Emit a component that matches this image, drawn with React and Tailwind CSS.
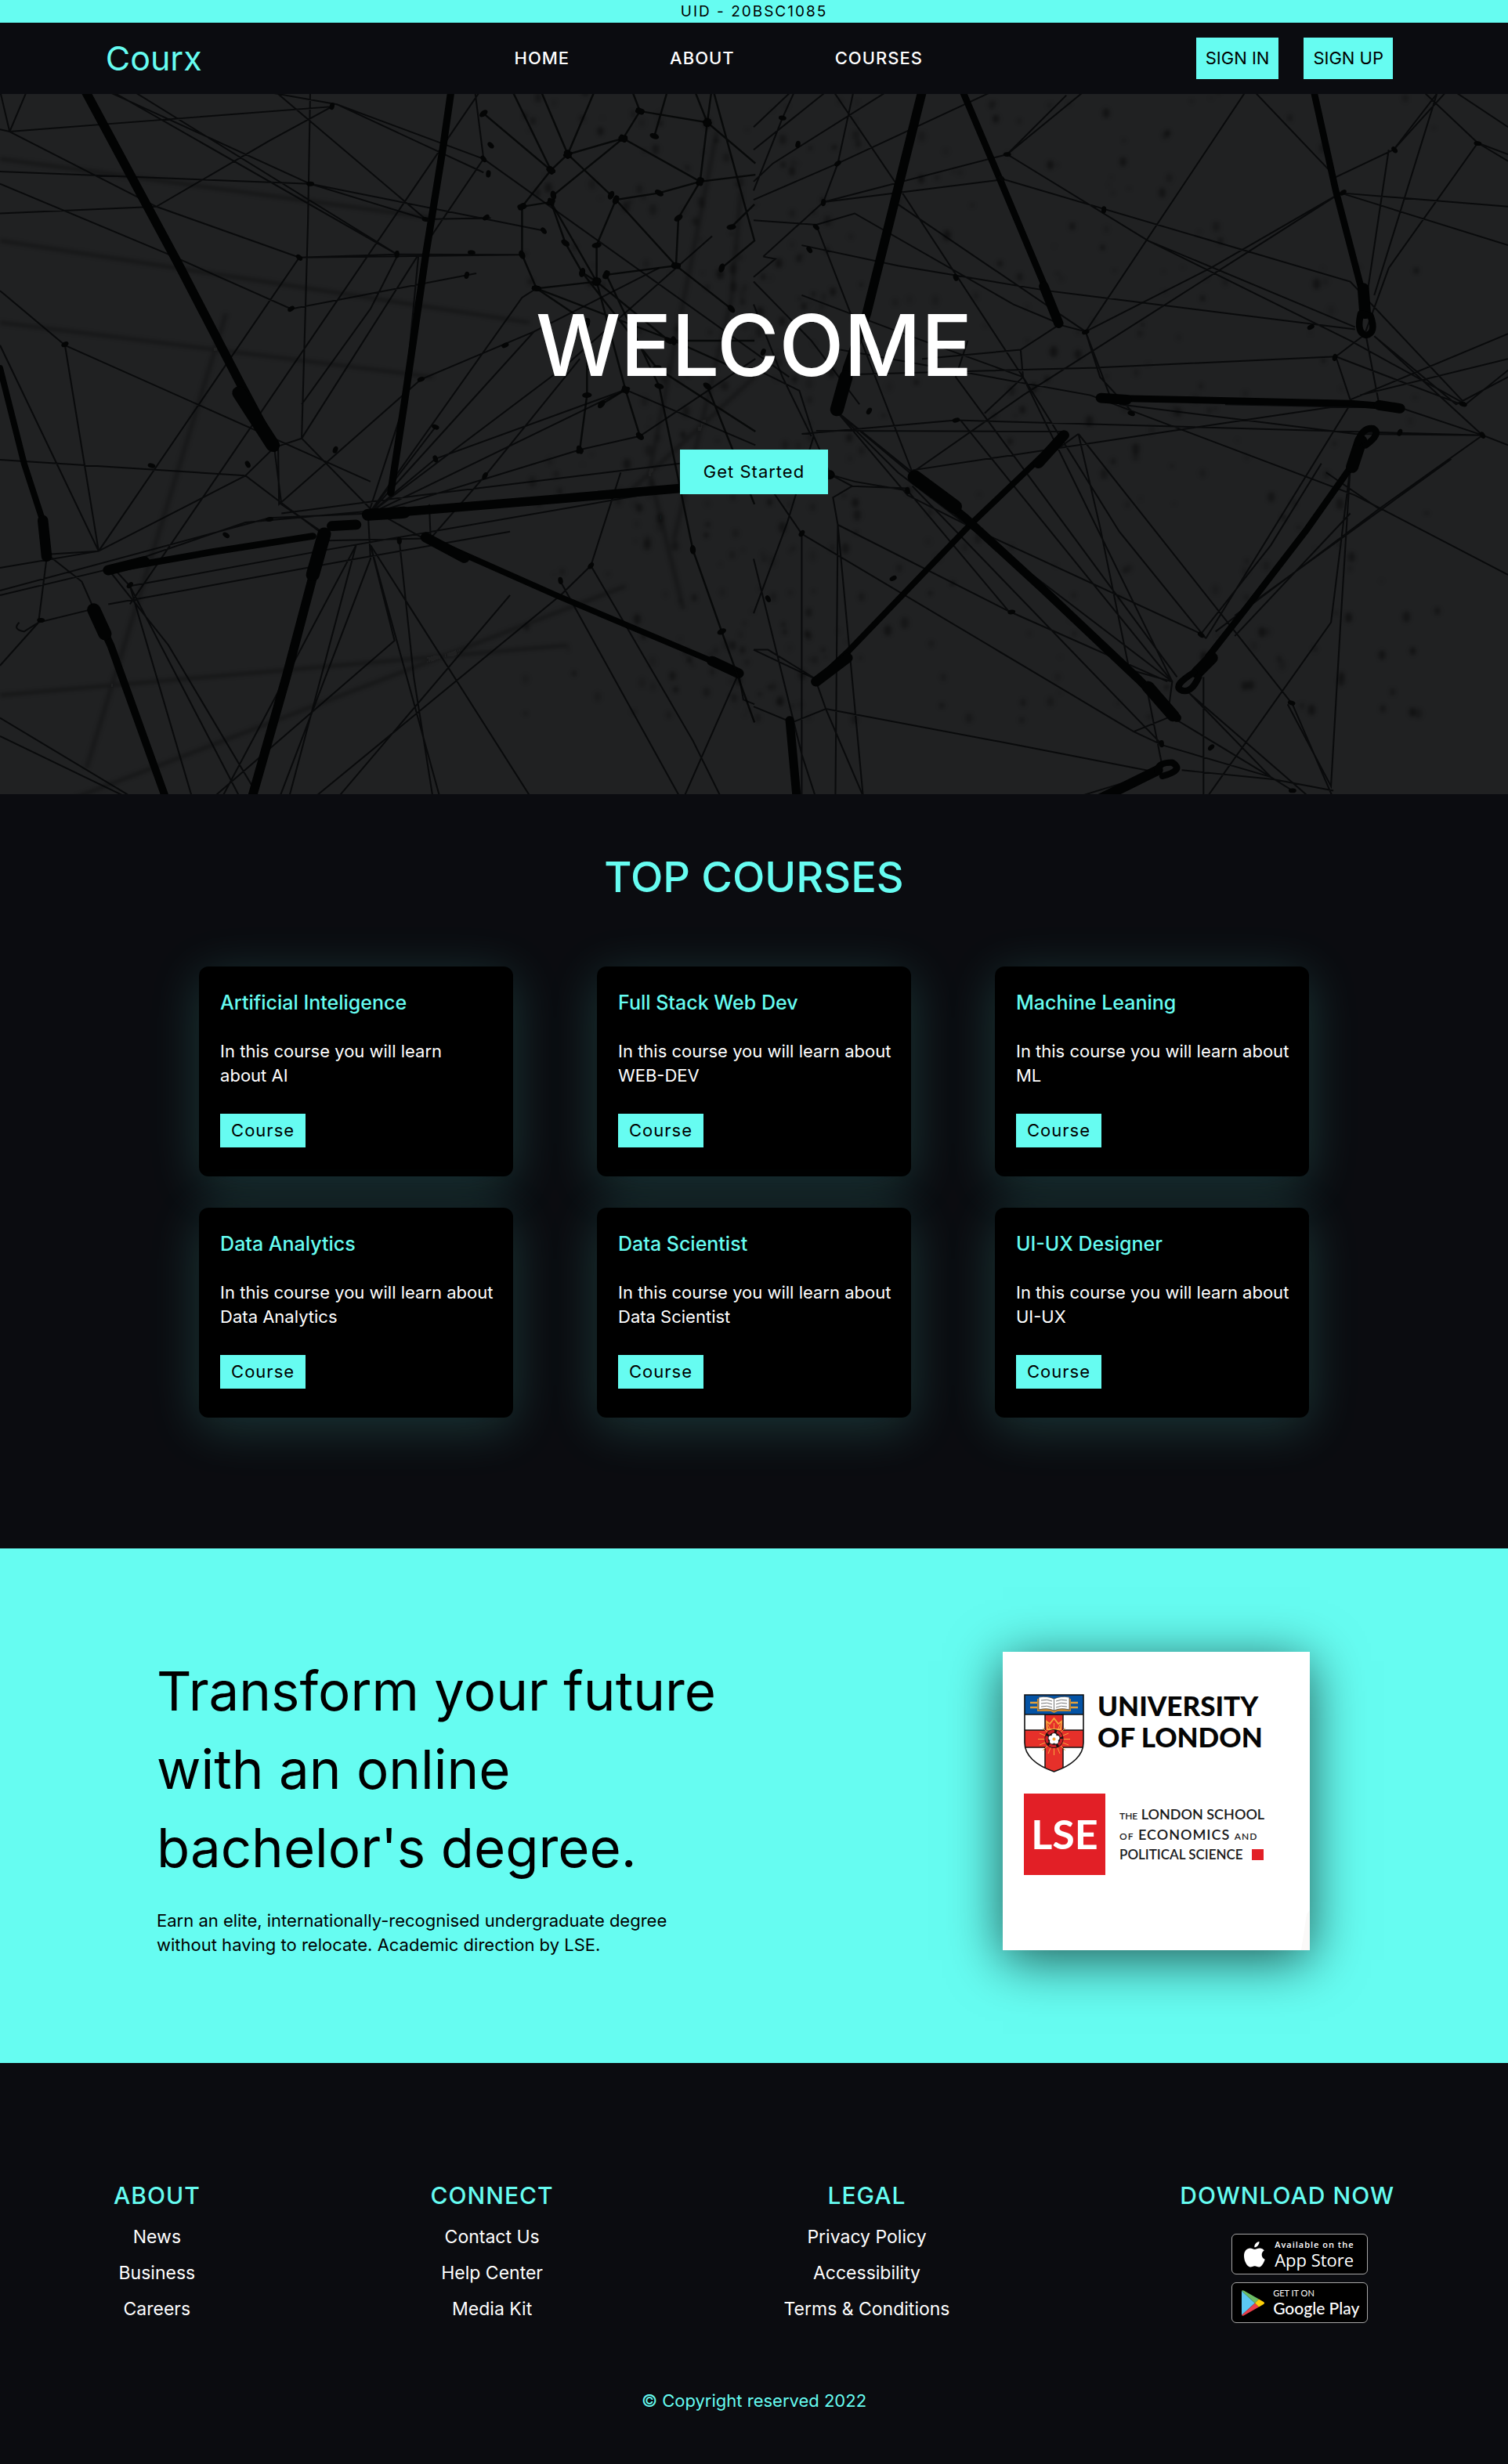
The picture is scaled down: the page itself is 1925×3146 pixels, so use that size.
import React from "react";

const COURSES = [
  ["Artificial Inteligence", "In this course you will learn about\u00a0AI"],
  ["Full Stack Web Dev", "In this course you will learn about WEB-DEV"],
  ["Machine Leaning", "In this course you will learn about ML"],
  ["Data Analytics", "In this course you will learn about Data Analytics"],
  ["Data Scientist", "In this course you will learn about Data Scientist"],
  ["UI-UX Designer", "In this course you will learn about UI-UX"],
];

const LINKS = [
  ["About", ["News", "Business", "Careers"]],
  ["Connect", ["Contact Us", "Help Center", "Media Kit"]],
  ["Legal", ["Privacy Policy", "Accessibility", "Terms & Conditions"]],
];

/* Hero web drawing: each half has its own strands, [width, path]. */
const LEFT_STRANDS = [
  [19, "M172 0L370 390L500 655L570 795"],
  [29, "M497 675L567 790"],
  [13, "M0 620L50 830L90 960L98 1030"],
  [22, "M89 955L97 1035"],
  [15, "M939 0L920 140L885 370L840 700L812 895"],
  [20, "M765 943L1160 908L1413 885L1725 855"],
  [26, "M765 943L840 938"],
  [15, "M225 1065L440 1025L650 990"],
  [22, "M225 1065L300 1045M690 968L740 965"],
  [19, "M678 985L650 1080L595 1300L523 1568"],
  [28, "M674 985L650 1075"],
  [16, "M195 1150L230 1230L345 1568"],
  [28, "M195 1152L218 1205"],
  [13, "M885 993L1160 1122L1480 1265L1535 1292"],
  [22, "M885 993L965 1038M1480 1265L1535 1292"],
];
const RIGHT_STRANDS = [
  [19, "M353 0L300 225L235 500L195 620L174 712"],
  [28, "M192 640L173 712"],
  [14, "M430 0L512 205L605 440L635 525"],
  [20, "M603 440L634 522"],
  [14, "M1162 0L1210 230L1263 445"],
  [24, "M1267 445L1271 500"],
  [15, "M722 686L900 690L1240 698L1335 706"],
  [22, "M722 686L775 690M1300 702L1343 709"],
  [13, "M645 768L450 965L200 1240L130 1310"],
  [22, "M645 768L592 830M195 1258L130 1310"],
  [18, "M335 860L440 950L600 1105L800 1305L880 1390"],
  [30, "M335 860L418 925"],
  [26, "M820 1322L872 1385"],
  [14, "M1240 840L1150 975L1030 1140L945 1255"],
  [26, "M1262 780L1244 838M952 1258L922 1290"],
  [18, "M75 1395L90 1568"],
  [22, "M720 1568L840 1505"],
  [14, "M1262 500Q1252 543 1273 548Q1295 543 1282 505Z"],
  [14, "M1255 785Q1265 750 1288 753Q1305 765 1272 790"],
  [14, "M915 1290Q872 1318 887 1328Q908 1340 925 1300"],
  [14, "M840 1508Q838 1488 870 1488Q896 1505 850 1518"],
];
const LEFT_THREADS =
  "M0 188L645 215L885 293M645 215L1130 318M0 95L20 100L690 45M20 100L0 10M20 100L60 0M20 100L325 265L622 377L1085 371M0 215L350 370L605 490L990 412M200 0L645 215M260 0L825 370L622 377M230 10L825 370L1090 371M645 0L640 300L627 775M570 10L885 293L1020 290M540 10L700 40L1005 160L1640 640M700 40L1005 190M987 10L1005 160L890 340M870 370L627 775L770 930L880 995M825 375L770 490L627 700M0 822L510 857L670 985M0 1060L205 1023L510 857M0 1120L225 1063L510 960L770 935M0 1110L560 950L770 940M205 1023L135 570L0 450M135 570L770 870M0 570L205 1023M325 265L0 280M325 265L560 120L690 45M205 1023L622 377M98 1030L205 1023M98 1030L170 1090L195 1150M98 1030L80 1180L195 1150M240 1065L270 1100L400 1568M270 1100L500 1568M225 1063L350 1230L540 1568M570 795L510 857M570 795L627 775M570 795L585 920L675 985M578 795L580 920L875 645L1110 540M765 943L1110 540L1370 400M765 943L905 820L1300 668L1570 790M765 943L1300 668M765 943L1170 620L1480 330M765 943L1085 465L1115 445M765 943L840 700L870 370M765 943L905 750M765 943L1205 800L1330 770L1570 600M585 940L875 900L1413 830M270 1100L680 1020L1413 885M225 1140L740 1040L1060 980M770 1010L915 1568M770 1010L820 1220L440 1568M770 1010L1105 1568M740 1010L460 1568M740 1010L600 1568M680 1000L890 995M765 943L770 1040L580 1568M830 1000L860 1300L900 1568M1228 1055L1165 1120L650 1568M1228 1055L1440 1440L1500 1568M1228 1055L1290 850M1165 1090L1415 1568M1535 1292L1420 1568M1535 1292L1545 1350L1568 1360M1060 1120L700 1568M0 1390L280 1568M0 1430L270 1568M0 1275L80 1180L50 1200Q25 1195 40 1180M892 920L895 995L1010 855L1205 600M270 1140L1005 0";
const LEFT_CLUSTER =
  "M1115 445L1085 371L1085 265L1145 185L1180 150L1295 115L1330 55L1470 80L1570 170M1085 265L1145 255L1240 430L1115 445L1220 520M1145 255L1175 345L1210 410L1240 430M1295 115L1455 210L1570 195M1295 115L1150 240M1455 210L1370 235L1280 250L1240 350L1240 430M1455 210L1470 80M1455 210L1410 290L1405 395L1260 415M1405 395L1520 490M1280 250L1405 395M1145 185L1005 60M1145 185L1060 0M1180 150L1120 0M1180 150L1240 0M1180 150L1270 240M1330 55L1310 0M1470 80L1440 0M1470 80L1480 0M1360 110L1390 0M1240 430L1300 668L1330 770M1220 520L1220 680L1205 800M1260 415L1370 660L1440 1020L1500 1200L1568 1400M1470 660L1568 920M1480 0L1568 340L1500 400M1520 310L1568 260M1300 668L1250 700M1115 445L1400 560L1568 640M1240 430L1390 560L1568 560M1210 410L1365 620L1570 760";
const RIGHT_THREADS =
  "M0 140L165 0M0 90L90 0M0 230L60 70L90 0M165 10L300 220L560 640L760 980L940 1215M210 0L175 170L0 250M175 170L145 255L520 205L1240 430L1480 700L1568 625M175 170L520 0M280 10L40 170L0 210M145 255L527 150L820 340L1250 530M145 255L20 375M527 150L700 0M527 150L650 20M820 340L1240 560L1480 700M1030 0L1210 200M1030 0L690 540L740 680M1210 200L1330 140L1450 0M1330 140L1425 10M1220 235L1568 265M1220 235L1568 350M1220 235L950 400L690 540M1220 235L990 390L560 680L330 850M1380 0L1505 125L1568 165M1440 0L1568 90M1505 125L1568 150M1505 125L1320 400L1272 540M1320 140L1272 480M1425 0L1290 460M100 350L300 395L610 450L1250 535M300 260L690 540M130 305L330 850M130 305L0 295M130 305L210 280L540 480L630 520M20 375L45 380L0 420M1210 595L1272 545L1300 700M1210 595L1240 690M1210 595L700 620L180 635M1210 595L1470 700M1290 550L1515 768M1290 550L1460 700L1568 640M1240 690L1568 545M1260 680L1568 600M1515 768L1345 708L980 700M1515 768L1250 765L760 700M1515 768L1240 760L420 735L100 765M1515 768L1568 790M1515 768L1300 930L960 1200M1450 820L1000 1165M130 758L640 760M330 845L860 760L1240 700M180 580L700 680L1250 900L1568 1075M690 540L635 525L555 580L350 600M555 580L560 640L480 720M690 540L720 640L790 720M675 765L720 970L780 1280M675 765L1120 1360L1205 1568M675 765L590 830M172 715L335 860M172 715L320 900L470 980L930 1205M172 715L330 850M172 715L300 850L870 1310M160 855L205 880L320 885M160 855L210 870L320 890L530 1155M205 880L165 905L175 965L530 1155L860 1310M175 965L170 1568M100 985L790 1420L850 1450L1075 1520L1120 1550M100 985L100 1568M100 985L0 830M175 965L228 1568M125 770L95 670L0 620M125 770L70 960L0 1160M125 770L160 855M0 1040L100 1470L130 1568M0 1240L130 1305M0 1240L30 1240L130 1305M0 1365L80 1400L150 1370L230 1568M150 1370L550 1450L840 1510M130 1310L150 1370M330 880L850 1450M430 735L870 1310M560 640L870 1310M445 560L420 640L880 1300M930 1205L1075 1010L1180 830M940 1215L1240 700M1240 840L1200 1180L940 1568M1240 840L1220 1180L1200 1540L1110 1360M1240 940L1000 1210M1190 850L1300 930M785 1285L870 1310L860 1390L790 1420L850 1450M820 1340L850 1500M905 1335L1075 1520M905 1335L1150 1560M935 1300L935 1568M890 1505L1080 1525L1205 1550M880 1395L1075 1520M840 1510L660 1568M0 480L60 640L120 770M0 430L120 560L220 700M100 460L300 540L560 640";

const random = (seed) => () => {
  seed = (seed * 16807) % 2147483647;
  return seed / 2147483647;
};
const next = random(4242);
const SPECKS = Array.from({ length: 480 }, (_, i) => ({
  x: i % 3 === 0 ? 1300 + next() * 500 : 1090 + next() * 1900,
  y: next() * 1400,
  r: 2 + next() * 6,
  o: 0.1 + next() * 0.35,
}));
const knots = (path) =>
  [...path.matchAll(/[ML](\d+) (\d+)/g)]
    .map((m) => [Number(m[1]), Number(m[2])])
    .filter(([x, y]) => x > 5 && x < 1560 && y > 20 && y < 1540);
const LEFT_KNOTS = knots(LEFT_CLUSTER);
const THREAD_KNOTS = [
  [645, 215], [622, 377], [825, 370], [605, 490], [885, 293], [1005, 160], [690, 44], [135, 568],
  [315, 835], [515, 832], [697, 800], [875, 645], [905, 750], [905, 820], [1008, 857], [1205, 803],
  [1330, 772], [1165, 1088], [1228, 1055], [560, 953], [470, 988], [830, 1000], [270, 1098], [85, 1175],
  [1020, 130], [1015, 193], [1010, 289], [980, 366], [1130, 318], [970, 416], [1050, 570], [1300, 668],
];
const RIGHT_KNOTS = [
  [527, 150], [515, 203], [728, 272], [1225, 234], [1505, 126], [1332, 140], [1208, 597], [1158, 530],
  [1475, 700], [1515, 768], [1343, 762], [690, 541], [785, 720], [420, 421], [240, 715], [421, 735],
  [160, 853], [320, 890], [100, 984], [536, 1157], [930, 1207], [848, 1447], [951, 1455], [1120, 1550],
  [130, 310], [145, 256], [175, 170], [60, 70], [116, 360], [92, 128], [290, 1083], [1118, 1357], [30, 1128], [20, 585],
];

function Web({ strands, threads, points }) {
  return (
    <>
      <path d={threads} fill="none" stroke="#040506" strokeWidth="3.4" opacity=".8" />
      {strands.map(([w, d]) => (
        <path key={d} d={d} fill="none" stroke="#020303" strokeWidth={w} strokeLinejoin="round" strokeLinecap="round" />
      ))}
      {points.map(([x, y], i) => (
        <ellipse key={i} cx={x} cy={y} rx="8" ry="5" fill="#040505" transform={`rotate(${(i * 47) % 180} ${x} ${y})`} />
      ))}
    </>
  );
}

function HeroArt() {
  return (
    <svg aria-hidden="true" viewBox="0 0 1925 894" preserveAspectRatio="xMidYMid slice" className="absolute inset-0 h-full w-full">
      <defs>
        <filter id="soft" x="-10%" y="-10%" width="120%" height="120%">
          <feGaussianBlur stdDeviation="4" />
        </filter>
      </defs>
      <rect width="1925" height="894" fill="#202122" />
      <g transform="translate(0 -10) scale(.6142 .5803)">
        <g filter="url(#soft)">
          {SPECKS.map((s, i) => (
            <ellipse key={i} cx={s.x} cy={s.y} rx={s.r} ry={s.r * 1.6} fill="#060707" opacity={s.o} />
          ))}
          <path
            d="M0 160L900 290M0 340L1100 520M0 520L900 640M1300 1100L150 1568M1180 1230L0 1340M1490 100L1350 850L1420 1150M1540 230L1520 470L1400 1000M1568 640L1300 900M470 500L180 1500"
            fill="none"
            stroke="#151515"
            strokeWidth="8"
            opacity=".3"
          />
        </g>
        <Web strands={LEFT_STRANDS} threads={LEFT_THREADS} points={THREAD_KNOTS} />
        <path d={LEFT_CLUSTER} fill="none" stroke="#040505" strokeWidth="4" opacity=".85" />
        {LEFT_KNOTS.map(([x, y], i) => (
          <ellipse key={i} cx={x} cy={y} rx="10" ry="6" fill="#040505" transform={`rotate(${(i * 67) % 180} ${x} ${y})`} />
        ))}
      </g>
      <g transform="translate(962 -10) scale(.6142 .5803)">
        <Web strands={RIGHT_STRANDS} threads={RIGHT_THREADS} points={RIGHT_KNOTS} />
      </g>
    </svg>
  );
}

function UniversityLogo() {
  return (
    <svg viewBox="0 0 392 381" role="img" aria-label="University of London and LSE" className="block w-full">
      <rect width="392" height="381" fill="#fff" />
      <path d="M388 335L392 330V381H381Z" fill="#faf9f8" />
      <g transform="translate(27 54)">
        <path d="M1 1H76V62C76 78 62 91 38.500 99C15 91 1 78 1 62Z" fill="#fff" />
        <clipPath id="shield">
          <path d="M1 1H76V62C76 78 62 91 38.500 99C15 91 1 78 1 62Z" />
        </clipPath>
        <g clipPath="url(#shield)">
          <path d="M27 26H50V46H77V68H50V100H27V68H0V46H27Z" fill="#e6302a" stroke="#1a1212" strokeWidth="1.500" />
          <rect width="77" height="26" fill="#0453a5" />
          <path d="M0 26H77" stroke="#111" strokeWidth="1.500" />
        </g>
        <path d="M8 11H17M8 17H17M60 11H69M60 17H69" stroke="#e3a13a" strokeWidth="2.500" />
        <path d="M17 6H60V22H43L38.500 24L34 22H17Z" fill="#c98b34" />
        <path d="M19 4Q30 2 38.500 6Q47 2 58 4V20Q47 17 38.500 21Q30 17 19 20Z" fill="#fff" stroke="#444" strokeWidth=".8" />
        <path d="M38.500 6V21M22 8Q30 6 36 9M22 12Q30 10 36 13M22 16Q30 14 36 17M41 9Q47 6 55 8M41 13Q47 10 55 12M41 17Q47 14 55 16" fill="none" stroke="#777" strokeWidth="1" />
        <path d="M30 45L29 35L33 38L38.500 31L44 38L48 35L47 45Z" fill="none" stroke="#f5a63c" strokeWidth="1.800" />
        <path d="M38.500 37V78M18 57.500H59M24 43L53 72M53 43L24 72M20 50L57 65M57 50L20 65M31 39L46 76M46 39L31 76" stroke="#f5a63c" strokeWidth="1" />
        <circle cx="38.500" cy="57" r="12" fill="#171010" />
        <circle cx="38.500" cy="57" r="9.500" fill="none" stroke="#c82027" strokeWidth="3.500" strokeDasharray="9 3" />
        <g fill="#fff">
          <circle cx="38.500" cy="53" r="3" />
          <circle cx="42.500" cy="56" r="3" />
          <circle cx="41" cy="60.500" r="3" />
          <circle cx="36" cy="60.500" r="3" />
          <circle cx="34.500" cy="56" r="3" />
        </g>
        <circle cx="38.500" cy="57.500" r="2" fill="#f5a63c" />
        <path d="M1 1H76V62C76 78 62 91 38.500 99C15 91 1 78 1 62Z" fill="none" stroke="#111" strokeWidth="1.600" />
      </g>
      <g fontFamily="Lato, sans-serif" fontWeight="900" fontSize="35" fill="#050505">
        <text x="121" y="82">UNIVERSITY</text>
        <text x="121" y="122">OF LONDON</text>
      </g>
      <rect x="27" y="181" width="104" height="104" fill="#e21f26" />
      <text x="79" y="252" textAnchor="middle" fontFamily="Lato, sans-serif" fontSize="52" fontWeight="700" fill="#fff">
        LSE
      </text>
      <g fontFamily="Lato, sans-serif" fontWeight="600" fontSize="18" fill="#1a1a1c">
        <text x="149" y="214"><tspan fontSize="12">THE</tspan> LONDON SCHOOL</text>
        <text x="149" y="240" letterSpacing="1"><tspan fontSize="12">OF</tspan> ECONOMICS <tspan fontSize="12">AND</tspan></text>
        <text x="149" y="265" fontSize="17">POLITICAL SCIENCE</text>
      </g>
      <rect x="318" y="252" width="15" height="14" fill="#e21f26" />
    </svg>
  );
}

function AppleIcon() {
  return (
    <svg viewBox="0 0 27 33" aria-hidden="true" className="h-[33px] w-[27px]" fill="#fff">
      <path d="M19.500 0C19.800 3.600 16.600 7.400 13.300 7.300C13 3.800 16 .4 19.500 0ZM25.800 11.300C21.300 14.100 21.800 20.600 26.700 22.800C25.600 26.400 22.900 31.800 19.900 32.500C17.500 33 16.500 31.300 13.700 31.300C10.900 31.300 9.900 33 7.500 32.500C3.500 31.500 0 24.500 0 18.300C0 12 3.600 8.500 7.800 8.500C10.200 8.500 12 10 13.700 10C15.400 10 17.300 8.300 20.200 8.400C22.500 8.500 24.600 9.500 25.800 11.300Z" />
    </svg>
  );
}

function PlayIcon() {
  return (
    <svg viewBox="0 0 29 33" aria-hidden="true" className="h-[33px] w-[29px]">
      <path d="M0 1V32L17 16.500Z" fill="#5bc8f3" />
      <path d="M0 1Q1-.5 3 .8L22 11.500L17 16.500Z" fill="#6cbd66" />
      <path d="M0 32Q1 33.500 3 32.300L22 21.500L17 16.500Z" fill="#ea3f4c" />
      <path d="M22 11.500L28 15Q30 16.500 28 18L22 21.500L17 16.500Z" fill="#fdcf08" />
    </svg>
  );
}

export default function App() {
  return (
    <div className="min-h-screen bg-[#0b0c10] font-[Inter,sans-serif] text-[22px] text-white">
      <p className="bg-[#66fcf1] text-center text-[19px] leading-[29px] tracking-[2px] text-black">UID - 20BSC1085</p>

      <header className="flex items-center justify-between py-[19px] pr-[147px] pl-[7%]">
        <a href="#" className="text-[43px] leading-[53px] text-[#66fcf1]">Courx</a>
        <nav className="flex gap-32 pl-[50px] font-medium tracking-[1px]">
          <a href="#home">HOME</a>
          <a href="#about">ABOUT</a>
          <a href="#courses">COURSES</a>
        </nav>
        <div className="flex gap-8">
          <button className="h-[53px] bg-[#66fcf1] px-3 text-black">SIGN IN</button>
          <button className="h-[53px] bg-[#66fcf1] px-3 text-black">SIGN UP</button>
        </div>
      </header>

      <section id="home" className="relative flex flex-col items-center overflow-hidden pt-[237px] pb-[383px]">
        <HeroArt />
        <h1 className="relative text-[108px] leading-[168px] font-medium">WELCOME</h1>
        <button className="relative mt-[49px] h-[57px] bg-[#66fcf1] px-[30px] tracking-[1px] text-black">Get Started</button>
      </section>

      <section id="courses" className="px-[13.2%] pt-16 pb-[167px]">
        <h2 className="text-center text-[54px] leading-[84px] font-medium text-[#66fcf1]">TOP COURSES</h2>
        <div className="mt-[72px] grid grid-cols-3 gap-x-[107px] gap-y-10">
          {COURSES.map(([title, text]) => (
            <article key={title} className="rounded-xl bg-black pt-[27px] pr-4 pb-[37px] pl-[27px] shadow-[0_12px_64px_rgba(102,252,241,0.18)]">
              <h3 className="text-[25px] leading-[38px] font-medium text-[#66fcf1]">{title}</h3>
              <p className="mt-7 leading-[31px]">{text}</p>
              <button className="mt-[33px] block h-[43px] bg-[#66fcf1] px-[14px] tracking-[1px] text-black">Course</button>
            </article>
          ))}
        </div>
      </section>

      <section id="about" className="flex items-start justify-between bg-[#66fcf1] pt-[132px] pr-[253px] pb-[135px] pl-[200px] text-black">
        <div className="max-w-[730px]">
          <h2 className="text-[69px] leading-[100px]">Transform your future with an online bachelor's degree.</h2>
          <p className="mt-7 leading-[31px]">
            Earn an elite, internationally-recognised undergraduate degree without having to relocate. Academic direction by LSE.
          </p>
        </div>
        <div className="w-[392px] shadow-[0_12px_64px_rgba(0,0,0,0.65)]">
          <UniversityLogo />
        </div>
      </section>

      <footer className="pt-[147px] pb-[66px]">
        <div className="flex items-start justify-between px-[145px]">
          {LINKS.map(([title, items]) => (
            <div key={title} className="text-center">
              <h4 className="text-[30px] leading-[44px] font-medium tracking-[1px] text-[#66fcf1] uppercase">{title}</h4>
              <ul className="mt-2 text-[23px] leading-[46px]">
                {items.map((item) => (
                  <li key={item}>
                    <a href="#">{item}</a>
                  </li>
                ))}
              </ul>
            </div>
          ))}
          <div>
            <h4 className="text-[30px] leading-[44px] font-medium tracking-[1px] text-[#66fcf1] uppercase">Download Now</h4>
            <div className="mt-[27px] flex flex-col items-center gap-[10px] pl-8">
              <a href="#" className="flex h-[52px] w-[174px] items-center gap-3 rounded-md border border-[#a6a6a6] bg-black pl-[15px]">
                <AppleIcon />
                <span className="font-['Open_Sans',sans-serif]">
                  <span className="block text-[11px] leading-[14px] font-semibold tracking-[1px]">Available on the</span>
                  <span className="block text-[22px] leading-6 font-medium">App Store</span>
                </span>
              </a>
              <a href="#" className="flex h-[52px] w-[174px] items-center gap-[11px] rounded-md border border-[#a6a6a6] bg-black pl-3">
                <PlayIcon />
                <span className="font-[Lato,sans-serif]">
                  <span className="block text-[11px] leading-[14px]">GET IT ON</span>
                  <span className="block text-[21px] leading-6 font-medium">Google Play</span>
                </span>
              </a>
            </div>
          </div>
        </div>
        <p className="mt-[78px] text-center leading-8 text-[#66fcf1]">© Copyright reserved 2022</p>
      </footer>
    </div>
  );
}
